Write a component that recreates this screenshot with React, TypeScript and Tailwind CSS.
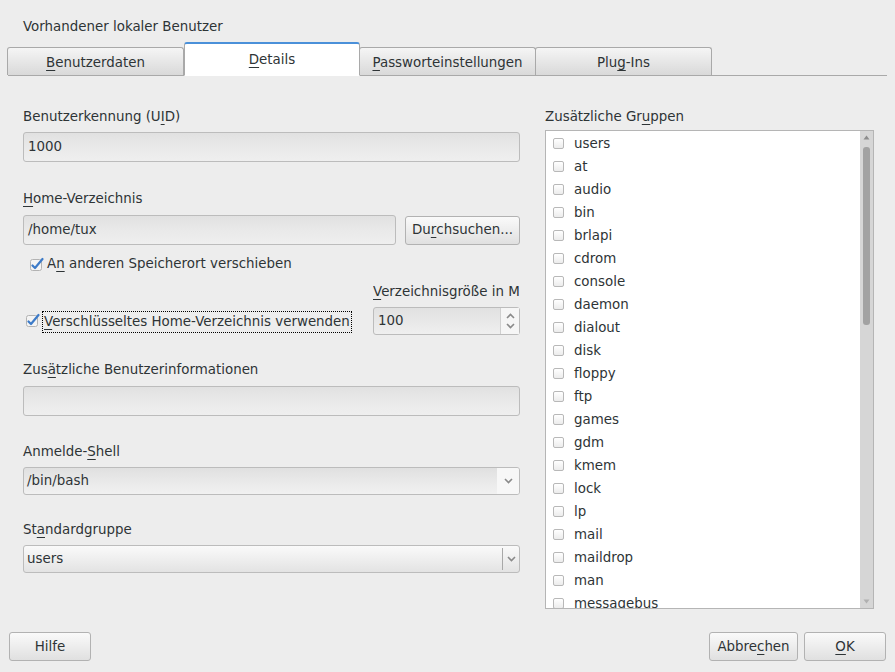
import React from "react";

const groups = [
  "users",
  "at",
  "audio",
  "bin",
  "brlapi",
  "cdrom",
  "console",
  "daemon",
  "dialout",
  "disk",
  "floppy",
  "ftp",
  "games",
  "gdm",
  "kmem",
  "lock",
  "lp",
  "mail",
  "maildrop",
  "man",
  "messagebus",
];

const U: React.FC<{ children: React.ReactNode }> = ({ children }) => (
  <span className="underline underline-offset-[3px] decoration-1">{children}</span>
);

const Checked: React.FC = () => (
  <svg width="14" height="14" viewBox="0 0 14 14" className="shrink-0">
    <rect x="0.5" y="2.5" width="11" height="11" rx="2" fill="#f4f4f4" stroke="#b3b3b3" />
    <path d="M2.5 8.5 L5 11 L12.5 2" fill="none" stroke="#3d7bc8" strokeWidth="2.2" strokeLinecap="round" strokeLinejoin="round" />
  </svg>
);

const Chevron: React.FC<{ up?: boolean }> = ({ up }) => (
  <svg width="9" height="6" viewBox="0 0 9 6">
    <path
      d={up ? "M1 5 L4.5 1.5 L8 5" : "M1 1 L4.5 4.5 L8 1"}
      fill="none"
      stroke="#8a8a8a"
      strokeWidth="1.6"
    />
  </svg>
);

const Tab: React.FC<{ active?: boolean; children: React.ReactNode }> = ({ active, children }) =>
  active ? (
    <div className="w-[176px] h-[34px] -mb-px bg-white border border-[#a9a9a9] border-b-white border-t-2 border-t-[#4a90d9] rounded-t-[3px] flex items-center justify-center">
      {children}
    </div>
  ) : (
    <div className="w-[177px] h-[28px] -ml-px bg-gradient-to-b from-[#f5f5f5] to-[#d9d9d9] border border-[#a9a9a9] border-b-0 rounded-t-[3px] flex items-center justify-center">
      {children}
    </div>
  );

const Field: React.FC<{ value?: string; className?: string }> = ({ value, className }) => (
  <div
    className={`h-[30px] border border-[#bcbcbc] rounded-[3px] bg-gradient-to-b from-[#e1e1e1] via-[#e9e9e9] to-[#efefef] flex items-center px-[4px] ${className ?? ""}`}
  >
    {value}
  </div>
);

const Button: React.FC<{ className?: string; children: React.ReactNode }> = ({ className, children }) => (
  <div
    className={`h-[29px] border border-[#b2b2b2] rounded-[3px] bg-gradient-to-b from-[#fafafa] to-[#e0e0e0] flex items-center justify-center ${className ?? ""}`}
  >
    {children}
  </div>
);

export default function App() {
  return (
    <div
      className="w-[895px] h-[672px] bg-[#ededed] text-[#2e3436] text-[13.4px] leading-[16px] flex flex-col overflow-hidden"
      style={{ fontFamily: '"DejaVu Sans", sans-serif' }}
    >
      <div className="pt-[19px] pl-[23px]">Vorhandener lokaler Benutzer</div>

      <div className="mt-[8px] ml-[8px] w-[879px] flex items-end border-b border-[#a9a9a9] h-[33px]">
        <Tab>
          <span className="mt-[2px]">
            <U>B</U>enutzerdaten
          </span>
        </Tab>
        <Tab active>
          <span>
            <U>D</U>etails
          </span>
        </Tab>
        <Tab>
          <span className="mt-[2px]">
            <U>P</U>assworteinstellungen
          </span>
        </Tab>
        <Tab>
          <span className="mt-[2px]">
            Plu<U>g</U>-Ins
          </span>
        </Tab>
      </div>

      <div className="flex-1 flex pt-[33px] pl-[23px]">
        <div className="w-[497px] flex flex-col">
          <div>
            Benutzerkennung (U<U>I</U>D)
          </div>
          <Field value="1000" className="mt-[7px]" />

          <div className="mt-[29px]">
            <U>H</U>ome-Verzeichnis
          </div>
          <div className="mt-[8px] flex items-center gap-[9px]">
            <Field value="/home/tux" className="flex-1 h-[29px]" />
            <Button className="w-[115px] h-[28px]">
              Du<U>r</U>chsuchen...
            </Button>
          </div>
          <div className="mt-[11px] ml-[7px] flex items-center gap-[3px]">
            <Checked />
            <span>
              A<U>n</U> anderen Speicherort verschieben
            </span>
          </div>

          <div className="mt-[12px] flex">
            <div className="flex-1 pt-[27px] pl-[3px] flex items-start gap-[2px]">
              <div className="mt-[2px]">
                <Checked />
              </div>
              <span className="border border-dotted border-black px-[1px] py-[2px] whitespace-nowrap">
                <U>V</U>erschlüsseltes Home-Verzeichnis verwenden
              </span>
            </div>
            <div className="w-[147px] flex flex-col">
              <div className="whitespace-nowrap overflow-hidden">
                <U>V</U>erzeichnisgröße in MB
              </div>
              <div className="mt-[7px] h-[28px] flex border border-[#bcbcbc] rounded-[3px] bg-gradient-to-b from-[#e1e1e1] to-[#efefef]">
                <div className="flex-1 flex items-center px-[4px]">100</div>
                <div className="w-[19px] bg-[#f6f6f6] border-l border-[#d0d0d0] flex flex-col items-center justify-center gap-[4px]">
                  <Chevron up />
                  <Chevron />
                </div>
              </div>
            </div>
          </div>

          <div className="mt-[27px]">
            Zus<U>ä</U>tzliche Benutzerinformationen
          </div>
          <Field className="mt-[8px]" />

          <div className="mt-[28px]">
            Anmelde-<U>S</U>hell
          </div>
          <div className="mt-[7px] h-[28px] flex border border-[#bcbcbc] rounded-[3px] bg-gradient-to-b from-[#e0e0e0] via-[#e9e9e9] to-[#f1f1f1] overflow-hidden">
            <div className="flex-1 flex items-center px-[3px]">/bin/bash</div>
            <div className="w-[22px] bg-[#f7f7f7] flex items-center justify-center">
              <Chevron />
            </div>
          </div>

          <div className="mt-[27px]">
            St<U>a</U>ndardgruppe
          </div>
          <div className="mt-[7px] h-[28px] flex border border-[#bcbcbc] rounded-[3px] bg-gradient-to-b from-[#fafafa] to-[#e3e3e3] overflow-hidden">
            <div className="flex-1 flex items-center px-[3px]">users</div>
            <div className="my-[2px] w-px bg-[#a8a8a8]" />
            <div className="w-[16px] flex items-center justify-center">
              <Chevron />
            </div>
          </div>
        </div>

        <div className="ml-[25px] w-[329px] flex flex-col">
          <div>
            Zusätzliche Gr<U>u</U>ppen
          </div>
          <div className="mt-[5px] h-[479px] bg-white border border-[#b5b5b5] flex overflow-hidden">
            <div className="flex-1 flex flex-col pt-[1px] pl-[7px]">
              {groups.map((g) => (
                <div key={g} className="h-[23px] shrink-0 flex items-center gap-[10px]">
                  <div className="w-[11px] h-[11px] rounded-[2px] border border-[#b8b8b8] bg-gradient-to-b from-white to-[#ececec]" />
                  <span>{g}</span>
                </div>
              ))}
            </div>
            <div className="w-[13px] bg-[#d6d6d6] flex flex-col items-center">
              <svg width="7" height="5" viewBox="0 0 7 5" className="mt-[4px]">
                <path d="M0.5 4.5 L3.5 0.5 L6.5 4.5 Z" fill="#8c8c8c" />
              </svg>
              <div className="mt-[7px] w-[7px] h-[178px] rounded-[3px] bg-[#a2a2a2]" />
              <div className="flex-1" />
              <svg width="7" height="5" viewBox="0 0 7 5" className="mb-[4px]">
                <path d="M0.5 0.5 L3.5 4.5 L6.5 0.5 Z" fill="#b0b0b0" />
              </svg>
            </div>
          </div>
        </div>
      </div>

      <div className="flex items-center px-[9px] pb-[11px]">
        <Button className="w-[82px]">Hilfe</Button>
        <div className="flex-1" />
        <Button className="w-[89px]">
          Abbre<U>c</U>hen
        </Button>
        <Button className="w-[82px] ml-[6px]">
          <U>O</U>K
        </Button>
      </div>
    </div>
  );
}
